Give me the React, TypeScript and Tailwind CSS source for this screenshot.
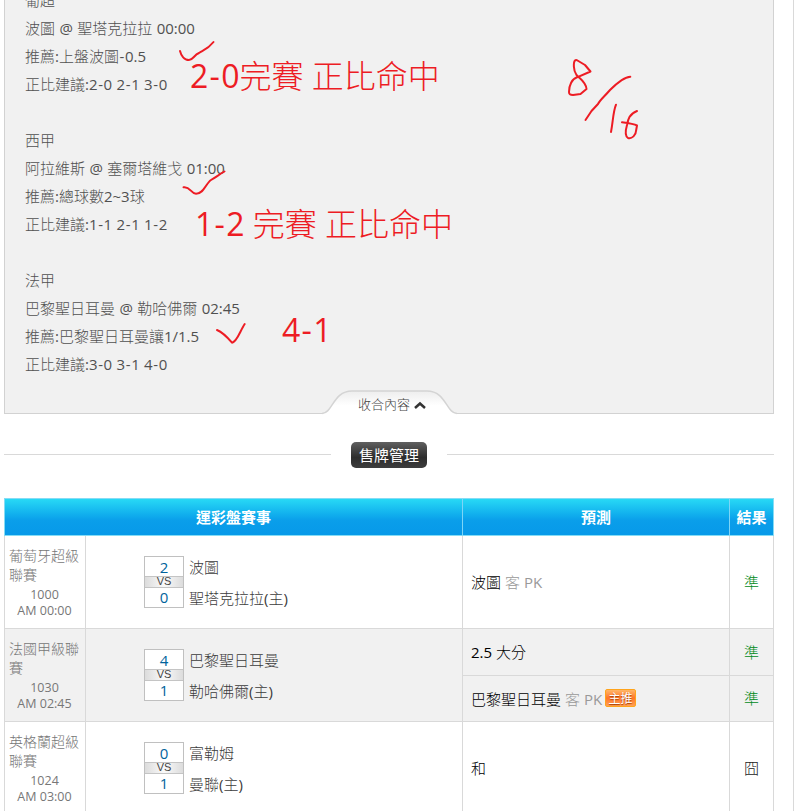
import { Fragment } from 'react'
import { clsx } from 'clsx'

type Pick = {
  text: string
  note?: string
  hot?: boolean
  result: string
}

type Match = {
  league: string
  no: string
  time: string
  away: string
  home: string
  score: [number, number]
  picks: Pick[]
}

const tips = [
  ['葡超', '波圖 @ 聖塔克拉拉 00:00', '推薦:上盤波圖-0.5', '正比建議:2-0 2-1 3-0'],
  ['西甲', '阿拉維斯 @ 塞爾塔維戈 01:00', '推薦:總球數2~3球', '正比建議:1-1 2-1 1-2'],
  ['法甲', '巴黎聖日耳曼 @ 勒哈佛爾 02:45', '推薦:巴黎聖日耳曼讓1/1.5', '正比建議:3-0 3-1 4-0'],
]

const matches: Match[] = [
  {
    league: '葡萄牙超級聯賽',
    no: '1000',
    time: 'AM 00:00',
    away: '波圖',
    home: '聖塔克拉拉(主)',
    score: [2, 0],
    picks: [{ text: '波圖', note: '客 PK', result: '準' }],
  },
  {
    league: '法國甲級聯賽',
    no: '1030',
    time: 'AM 02:45',
    away: '巴黎聖日耳曼',
    home: '勒哈佛爾(主)',
    score: [4, 1],
    picks: [
      { text: '2.5 大分', result: '準' },
      { text: '巴黎聖日耳曼', note: '客 PK', hot: true, result: '準' },
    ],
  },
  {
    league: '英格蘭超級聯賽',
    no: '1024',
    time: 'AM 03:00',
    away: '富勒姆',
    home: '曼聯(主)',
    score: [0, 1],
    picks: [{ text: '和', result: '囧' }],
  },
]

// Gives the hyphen in a score a little air on both sides
function Dashed({ text }: { text: string }) {
  return text.split('-').map((part, i) => (
    <Fragment key={i}>
      {i > 0 && <span className="px-[0.04em]">-</span>}
      {part}
    </Fragment>
  ))
}

function ScoreBox({ score }: { score: [number, number] }) {
  return (
    <div className="flex h-[52px] w-10 flex-col border border-[#c0c0c0] bg-white text-center text-[15px] text-[#00639c]">
      <span className="h-[19px] leading-[20px]">{score[0]}</span>
      <span className="h-3 border-y border-[#c4c4c4] bg-linear-to-r from-[#dcdcdc] via-[#fafafa] to-[#dcdcdc] font-['Liberation_Sans'] text-[11px] leading-[9px] text-[#444]">
        VS
      </span>
      <span className="h-[19px] leading-[19px]">{score[1]}</span>
    </div>
  )
}

function MatchRow({ match, striped }: { match: Match; striped: boolean }) {
  return (
    <div className={clsx('grid h-[93px] grid-cols-[81px_377px_310px] border-b border-[#d9d9d9]', striped && 'bg-[#f1f1f1]')}>
      <div className="border-r border-[#d9d9d9] pt-[10px] pl-1 text-[14px] leading-[19px] text-[#777]">
        <p className="w-[72px]">{match.league}</p>
        <div className="mt-[3px] w-[71px] text-center text-[12.5px] leading-4">
          <p>{match.no}</p>
          <p className="whitespace-nowrap">{match.time}</p>
        </div>
      </div>
      <div className="flex gap-[5px] border-r border-[#d9d9d9] pt-5 pl-[58px]">
        <ScoreBox score={match.score} />
        <div className="text-[15px] leading-[31px] text-[#3c3c3c]">
          <p className="-mt-[4px]">{match.away}</p>
          <p>{match.home}</p>
        </div>
      </div>
      <div className="flex flex-col">
        {match.picks.map((pick, i) => (
          <div
            key={pick.text}
            className={clsx(
              'grid grid-cols-[267px_43px] text-[15px]',
              match.picks.length === 1 ? 'h-[92px]' : 'h-[46px]',
              i > 0 && 'border-t border-[#d9d9d9]',
            )}
          >
            <div className="flex items-center border-r border-[#d9d9d9] pt-px pl-2 text-black">
              <span>{pick.text}</span>
              {pick.note && <span className="ml-1 text-[#999]">{pick.note}</span>}
              {pick.hot && (
                <span className="mb-[3px] ml-[3px] h-[18px] w-[31px] rounded-xs border border-[#ffa41c] bg-linear-to-b from-[#ffb566] via-[#ff7628] to-[#ffa055] text-center font-['Noto_Sans_CJK_TC',sans-serif] text-[12px] leading-[16px] text-white [text-shadow:0_1px_1px_#a33c00]">
                  主推
                </span>
              )}
            </div>
            <div className={clsx('flex items-center justify-center', pick.result === '準' ? 'text-[#008a1a]' : 'text-[#222]')}>
              {pick.result}
            </div>
          </div>
        ))}
      </div>
    </div>
  )
}

// Red pen marks drawn over the tips panel
function PenMarks() {
  return (
    <div className="pointer-events-none absolute inset-y-0 -left-1 w-[774px] text-[32px] leading-[40px] whitespace-nowrap text-[#ed1c24]">
      <svg className="absolute top-0 left-0" width="774" height="413" fill="none" stroke="#ed1c24" strokeWidth="2" strokeLinecap="round" strokeLinejoin="round">
        <path d="M180 51C181 55 184 60 189 60C193 60 194 55 199 53C204 50 208 49 213.500 42" />
        <path d="M183.500 187.300C190 186 191 193.700 196 193.700C204 193.700 206 183 211 180C216 177 220 174 224.500 171.500" />
        <path d="M217 330C222 332 228 338 232 342.700C237 342 240 331 244.700 324" />
        <path d="M577.500 60.500L585 65L590.500 71.500L577 77.300C572 79 569 85 569 92C569 94.500 570 95 573 95L580.500 94L586.500 89C586 82 580 79 576.500 75C573 70 573.500 62 575 60.500Q576 59.500 577.500 60.500" />
        <path d="M630.300 76.700C623 77 615 85 610 90C604 97 600 100 598 104L591.500 111L585.500 120" />
        <path d="M616 104.700C613 112 613 122 611 132" />
        <path d="M637 111C629 114 628 120 627 125C625 132 625 136 628 138C632 139 636 135 636 131L637 125.500C634 124 627 123 622 122.300" />
      </svg>
      <span className="absolute top-[56px] left-[190px]">
        <Dashed text="2-0完賽 正比命中" />
      </span>
      <span className="absolute top-[204px] left-[195px]">
        <Dashed text="1-2 完賽 正比命中" />
      </span>
      <span className="absolute top-[310px] left-[282px]">
        <Dashed text="4-1" />
      </span>
    </div>
  )
}

export default function App() {
  return (
    <div className="h-[811px] w-[794px] overflow-hidden border-r border-[#d9d9d9] bg-white pl-1 font-['Open_Sans','Noto_Sans_CJK_TC_Light','Noto_Sans_CJK_TC',sans-serif]">
      <div className="relative h-[414px] w-[770px]">
        <section className="h-[414px] overflow-hidden border-x border-b border-[#d2d2d2] bg-[#f1f1f1]">
          <div className="-mt-[14px] flex flex-col gap-7 pl-5 text-[15px] leading-7 text-[#505050] [word-spacing:0.5px]">
            {tips.map((lines) => (
              <div key={lines[0]}>
                {lines.map((line) => (
                  <p key={line}>
                    <Dashed text={line} />
                  </p>
                ))}
              </div>
            ))}
          </div>
        </section>
        <button className="absolute top-[388px] left-[318px] h-[27px] w-[135px] text-[13px] text-[#444]">
          <svg className="absolute inset-0" width="135" height="27" fill="none">
            <defs>
              <linearGradient id="tab" x1="0" y1="0" x2="0" y2="1">
                <stop stopColor="#eeeeee" />
                <stop offset=".6" stopColor="#ffffff" />
              </linearGradient>
            </defs>
            <path d="M0 25.500C11 25 11 3.500 30 3.500H105C124 3.500 124 25 135 25.500V27H0Z" fill="url(#tab)" />
            <path d="M0 25.500C11 25 11 3 30 3H105C124 3 124 25 135 25.500" stroke="#d4d4d4" strokeWidth="1.500" />
            <path d="M93 20L98 15.500L103 20" stroke="#333" strokeWidth="2.500" />
          </svg>
          <span className="absolute top-[6px] left-[36px] leading-5">收合內容</span>
        </button>
        <PenMarks />
      </div>

      <div className="mt-7 flex h-[26px] w-[770px] items-center">
        <div className="mb-px h-px w-[327px] bg-[#d9d9d9]" />
        <button className="mx-5 h-[26px] w-[76px] rounded-[5px] bg-linear-to-b from-[#606060] via-[#2d2d2d] via-60% to-[#3d3d3d] font-['Noto_Sans_CJK_TC',sans-serif] text-[15px] text-white">
          售牌管理
        </button>
        <div className="mb-px h-px w-[327px] bg-[#d9d9d9]" />
      </div>

      <section className="mt-[30px] w-[770px]">
        <div className="grid h-[38px] grid-cols-[458px_267px_43px] border border-[#85dcf5] bg-linear-to-b from-[#28d9f5] via-[#0a9eea] via-60% to-[#0799e9] text-center font-['Noto_Sans_CJK_TC',sans-serif] text-[15px] leading-[35px] font-bold text-white">
          <span className="border-r border-[#7dd5f7]">運彩盤賽事</span>
          <span className="border-r border-[#7dd5f7]">預測</span>
          <span>結果</span>
        </div>
        <div className="border-x border-[#d9d9d9]">
          {matches.map((match, i) => (
            <MatchRow key={match.no} match={match} striped={i % 2 === 1} />
          ))}
        </div>
      </section>
    </div>
  )
}
